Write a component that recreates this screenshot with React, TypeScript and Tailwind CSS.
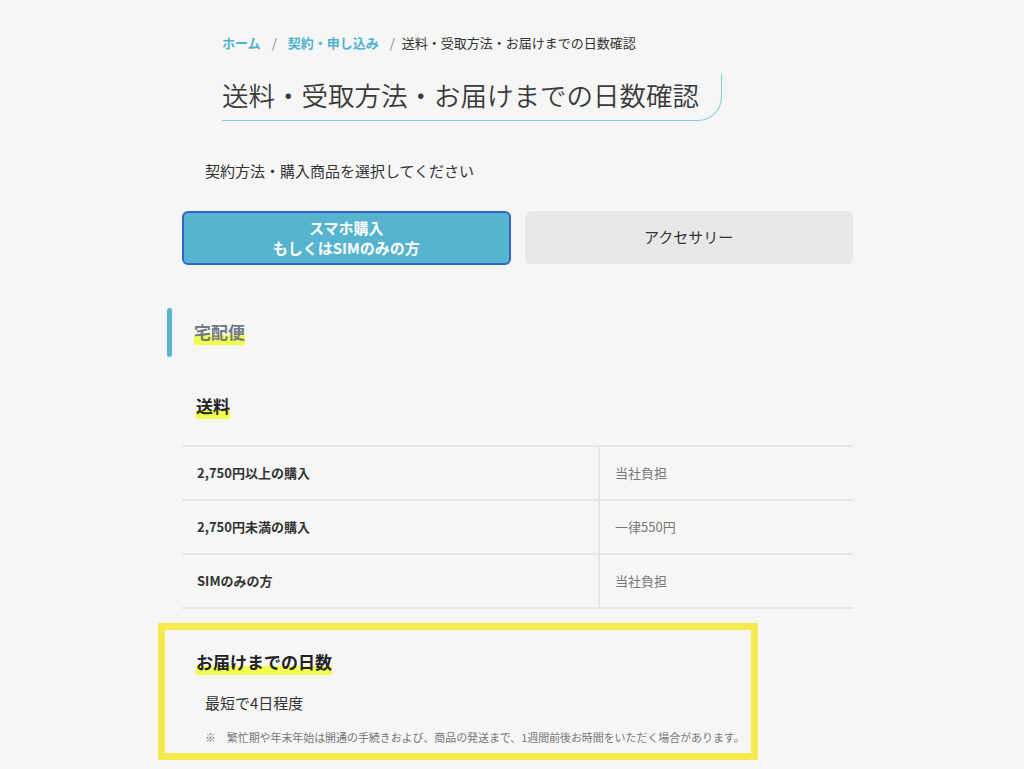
import React from "react";

const font = { fontFamily: '"Noto Sans CJK JP", "Noto Sans", sans-serif' };
const thin = {
  fontFamily:
    '"Noto Sans CJK JP DemiLight", "Noto Sans CJK JP Light", "Noto Sans CJK JP", "Noto Sans", sans-serif',
};

function Hl({ children, className }: { children: React.ReactNode; className?: string }) {
  return (
    <span
      className={
        "inline-block bg-[linear-gradient(transparent_62%,#f3ff4f_62%)] pb-[3px] leading-[20px] " +
        (className || "")
      }
    >
      {children}
    </span>
  );
}

const rows = [
  { k: "2,750円以上の購入", v: "当社負担" },
  { k: "2,750円未満の購入", v: "一律550円" },
  { k: "SIMのみの方", v: "当社負担" },
];

export default function App() {
  return (
    <div className="min-h-screen w-full bg-[#f6f6f6] text-[#333]" style={font}>
      <div className="ml-[182px] w-[671px] pt-[33px]">
        {/* breadcrumb */}
        <nav className="ml-[40px] flex items-center gap-[11px] text-[13px] leading-[20px]">
          <span className="font-bold text-[#4fb2d0]">ホーム</span>
          <span className="text-[#888]">/</span>
          <span className="font-bold text-[#4fb2d0]">契約・申し込み</span>
          <span className="text-[#888]">/</span>
          <span className="-ml-[4px] text-[#333]">送料・受取方法・お届けまでの日数確認</span>
        </nav>

        {/* title */}
        <div className="ml-[40px] mt-[21px] w-[500px] rounded-br-[24px] border-b border-r border-[#7fcde2] pb-[5px] pt-[1px]">
          <h1
            className="whitespace-nowrap text-[26.5px] font-light leading-[40px] text-[#3a3a3a]"
            style={thin}
          >
            送料・受取方法・お届けまでの日数確認
          </h1>
        </div>

        <p className="ml-[23px] mt-[38px] text-[15px] leading-[24px] text-[#333]">
          契約方法・購入商品を選択してください
        </p>

        {/* buttons */}
        <div className="mt-[28px] grid grid-cols-2 gap-[14px]">
          <button className="flex h-[54px] flex-col items-center justify-center rounded-[6px] border-2 border-[#2f63cf] bg-[#56b4cf] text-[15px] font-bold leading-[20px] text-white">
            <span>スマホ購入</span>
            <span>もしくはSIMのみの方</span>
          </button>
          <button className="flex h-[53px] items-center justify-center rounded-[6px] bg-[#e8e8e8] text-[15px] text-[#333]">
            アクセサリー
          </button>
        </div>

        {/* section heading */}
        <div className="-ml-[15px] mt-[43px] flex items-center gap-[22px]">
          <div className="h-[49px] w-[5px] rounded-full bg-[#56b4cf]" />
          <Hl className="pt-[2px] text-[17px] font-bold text-[#727a82]">宅配便</Hl>
        </div>

        <div className="ml-[14px] mt-[37px]">
          <Hl className="text-[17px] font-bold text-[#222]">送料</Hl>
        </div>

        {/* table */}
        <div className="mt-[26px] border-t-2 border-[#e6e6e6]">
          {rows.map((r) => (
            <div key={r.k} className="flex h-[54px] border-b-2 border-[#e6e6e6]">
              <div className="flex w-[418px] items-center border-r-2 border-[#e6e6e6] pl-[15px] text-[13px] font-bold text-[#333]">
                {r.k}
              </div>
              <div className="flex items-center pl-[15px] text-[13px] text-[#777]">{r.v}</div>
            </div>
          ))}
        </div>

        {/* delivery days box */}
        <div className="-ml-[24px] mt-[14px] w-[600px] border-[7px] border-[#f4ea4e] pb-[8px] pl-[31px] pt-[20px]">
          <Hl className="text-[17px] font-bold text-[#222]">お届けまでの日数</Hl>
          <p className="ml-[9px] mt-[17px] text-[15px] leading-[22px] text-[#333]">最短で4日程度</p>
          <p className="ml-[9px] mt-[15px] whitespace-nowrap text-[11px] leading-[16px] tracking-[-0.08px] text-[#777]">
            ※　繁忙期や年末年始は開通の手続きおよび、商品の発送まで、1週間前後お時間をいただく場合があります。
          </p>
        </div>
      </div>
    </div>
  );
}
